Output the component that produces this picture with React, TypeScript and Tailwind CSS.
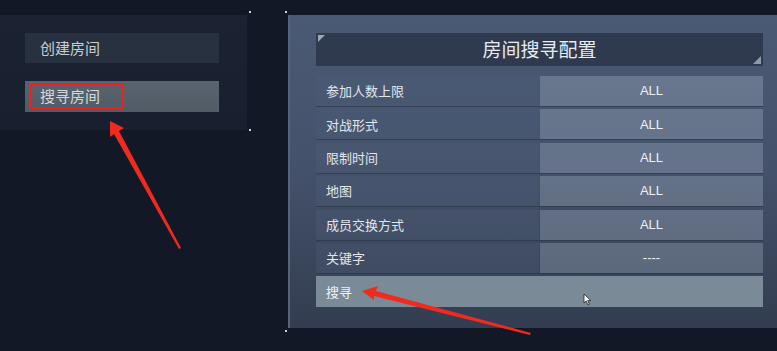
import React from 'react';

const rows: { label: string; value: string }[] = [
  { label: '参加人数上限', value: 'ALL' },
  { label: '对战形式', value: 'ALL' },
  { label: '限制时间', value: 'ALL' },
  { label: '地图', value: 'ALL' },
  { label: '成员交换方式', value: 'ALL' },
  { label: '关键字', value: '----' },
];

const cjk = { fontFamily: '"Noto Sans CJK SC", "Noto Sans", sans-serif' };
const latin = { fontFamily: '"Liberation Sans", Arial, sans-serif' };

export default function App() {
  return (
    <div className="relative flex h-[351px] w-[777px] overflow-hidden bg-[#121825]" style={cjk}>
      {/* left menu */}
      <div className="w-[288px] shrink-0 pt-[15px]">
        <div className="flex h-[115px] w-[247px] flex-col gap-[18px] bg-gradient-to-b from-[#1b2231] to-[#182030] pl-[25px] pt-[18px]">
          <div className="flex h-[30px] w-[194px] items-center bg-[#283140] pl-[15px] text-[15px] text-[#c9cdd3]">
            创建房间
          </div>
          <div className="relative flex h-[31px] w-[194px] items-center bg-gradient-to-b from-[#5a646f] to-[#515b66] pl-[15px] text-[15px] text-[#d4d8dc]">
            搜寻房间
            <div className="absolute left-[4px] top-[2px] h-[26px] w-[95px] rounded-[3px] border-2 border-[#f02020]" />
          </div>
        </div>
      </div>

      {/* right config panel */}
      <div className="mt-[15px] flex h-[313px] w-[489px] shrink-0 flex-col gap-[10px] border-l-2 border-[#56647b] bg-gradient-to-b from-[#4b5a74] via-[#44516a] to-[#333d50] pl-[26px] pt-[18px]">
        <div className="relative flex h-[33px] w-[447px] items-center justify-center bg-[#2f3a4e] text-[19px] text-[#e8ebef]">
          房间搜寻配置
          <div className="absolute left-[2px] top-[2px] h-0 w-0 border-r-[7px] border-t-[7px] border-r-transparent border-t-[#9aa6b6]" />
          <div className="absolute bottom-[2px] right-[2px] h-0 w-0 border-b-[8px] border-l-[8px] border-b-[#8e9aab] border-l-transparent" />
        </div>

        <div className="flex w-[447px] flex-col gap-[2.4px]">
          {rows.map((r) => (
            <div key={r.label} className="flex h-[31px] border-b border-[#2a3446]/60">
              <div className="flex w-[223px] items-center bg-[#4f5f7a]/30 pl-[10px] text-[13px] text-[#e2e6eb]">
                {r.label}
              </div>
              <div
                className="ml-[1px] flex flex-1 items-center justify-center bg-[#c8d6e6]/25 text-[13px] text-[#eef1f4]"
                style={latin}
              >
                {r.value}
              </div>
            </div>
          ))}
          <div className="relative flex h-[31px] items-center bg-[#7b8a97] pl-[10px] text-[13px] text-[#eef1f4]">
            搜寻
            <svg className="absolute left-[267px] top-[17px]" width="9" height="13" viewBox="0 0 9 13">
              <path d="M1 1 L1 10 L3.2 8 L5 12 L6.4 11.3 L4.7 7.6 L7.8 7.6 Z" fill="#ffffff" stroke="#222" strokeWidth="0.8" />
            </svg>
          </div>
        </div>
      </div>

      {/* corner dots */}
      <div className="absolute left-[249px] top-[11px] h-[2px] w-[2px] bg-[#cfd4da]" />
      <div className="absolute left-[249px] top-[129px] h-[2px] w-[2px] bg-[#cfd4da]" />
      <div className="absolute left-[285px] top-[11px] h-[2px] w-[2px] bg-[#cfd4da]" />
      <div className="absolute left-[285px] top-[330px] h-[2px] w-[2px] bg-[#cfd4da]" />

      {/* annotation arrows */}
      <svg className="pointer-events-none absolute left-0 top-0" width="777" height="351" viewBox="0 0 777 351">
        <polygon points="110,121 124,128 119,131 181,248 179,249 114,134 110,137" fill="#f02a1f" />
        <polygon points="362,291 378,286 376,291 531,333 530,335 374,296 374,300" fill="#f02a1f" />
      </svg>
    </div>
  );
}
